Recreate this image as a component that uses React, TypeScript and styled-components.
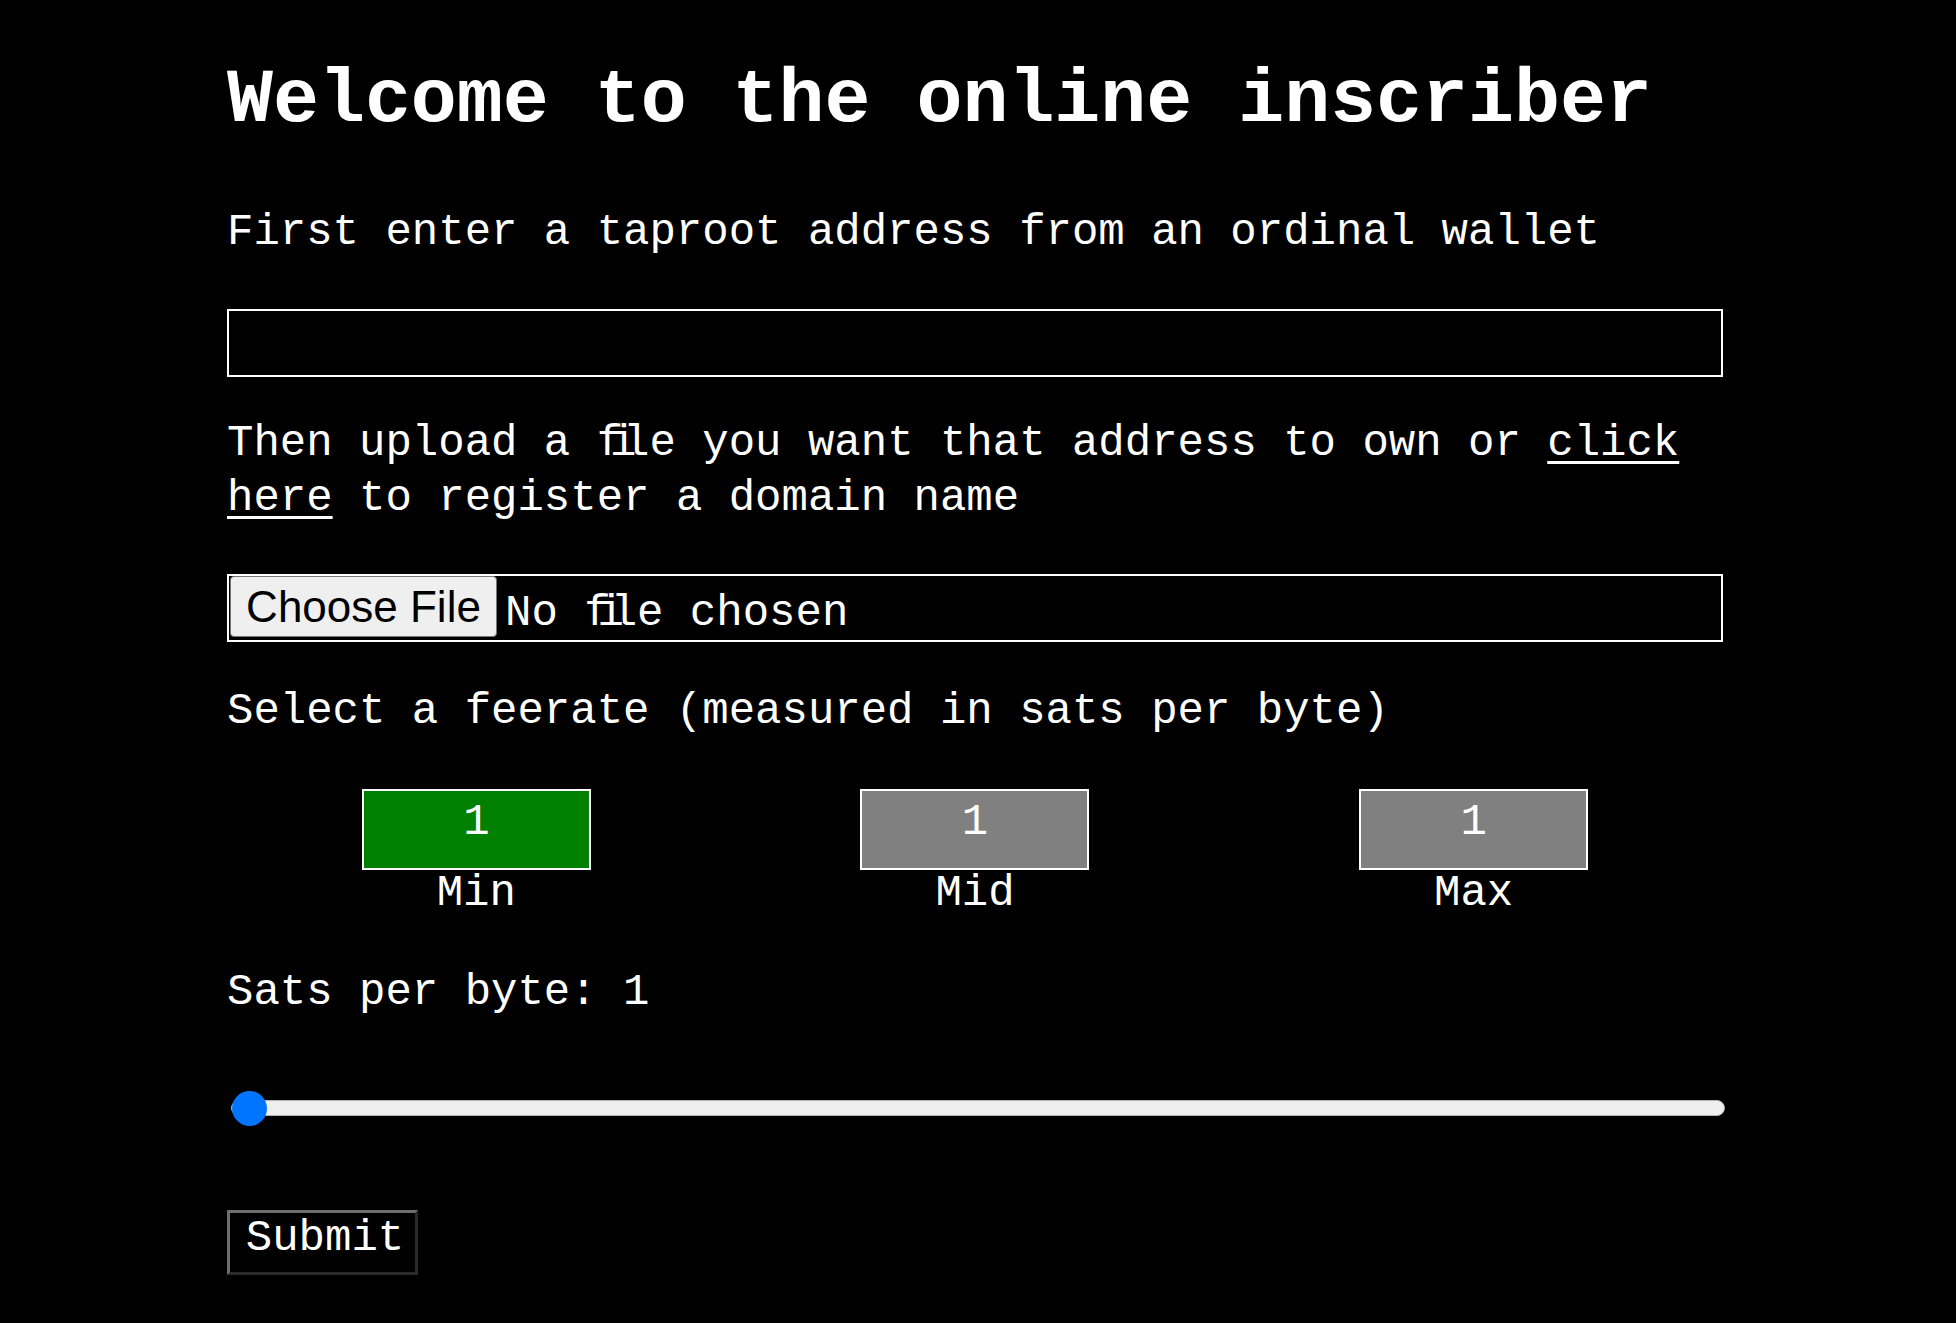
import React, { useState } from "react";
import styled, { createGlobalStyle } from "styled-components";

const GlobalStyle = createGlobalStyle`
  html, body {
    margin: 0;
    padding: 0;
    background: #000000;
  }
  body {
    color: #ffffff;
    font-family: "Liberation Mono", "Courier New", monospace;
  }
`;

const Page = styled.main`
  width: 1496px;
  margin-left: 227px;
  padding-top: 57px;
  padding-bottom: 46px;
  display: flex;
  flex-direction: column;
`;

const Title = styled.h1`
  margin: 0;
  font-family: "Liberation Mono", "Courier New", monospace;
  font-weight: 700;
  font-size: 76.6px;
  line-height: 87px;
  color: #ffffff;
`;

const Text = styled.p<{ $top: number }>`
  margin: ${(p) => p.$top}px 0 0 0;
  font-size: 44px;
  line-height: 55px;
  color: #ffffff;
`;

const Lig = styled.span`
  letter-spacing: -0.3em;
`;

const Link = styled.a`
  color: #ffffff;
  text-decoration: underline;
  text-decoration-thickness: 3px;
  text-underline-offset: 6px;
`;

const AddressInput = styled.input`
  box-sizing: border-box;
  margin: 49.5px 0 0 0;
  width: 100%;
  height: 68px;
  flex-shrink: 0;
  background: #000000;
  border: 2px solid #ffffff;
  color: #ffffff;
  font-family: "Liberation Mono", "Courier New", monospace;
  font-size: 44px;
  padding: 0 8px;
  outline: none;
`;

const FileBox = styled.label`
  box-sizing: border-box;
  margin-top: 48.5px;
  width: 100%;
  height: 68px;
  flex-shrink: 0;
  border: 2px solid #ffffff;
  display: flex;
  align-items: center;
  padding-left: 1px;
  gap: 8px;
  cursor: pointer;
`;

const HiddenFile = styled.input`
  display: none;
`;

const ChooseButton = styled.span`
  box-sizing: border-box;
  height: 61px;
  width: 267px;
  margin-top: -3px;
  display: flex;
  align-items: center;
  justify-content: center;
  background: #efefef;
  border: 1px solid #767676;
  border-radius: 4px;
  color: #000000;
  font-family: "Liberation Sans", Arial, sans-serif;
  font-size: 44px;
`;

const FileName = styled.span`
  margin-top: 10px;
  font-size: 44px;
  line-height: 55px;
  color: #ffffff;
`;

const FeeRow = styled.div`
  margin-top: 50.5px;
  display: grid;
  grid-template-columns: repeat(3, 1fr);
`;

const FeeOption = styled.div`
  display: flex;
  flex-direction: column;
  align-items: center;
`;

const FeeBox = styled.button<{ $active: boolean }>`
  box-sizing: border-box;
  width: 229px;
  height: 81px;
  flex-shrink: 0;
  padding: 0 0 15px 0;
  margin: 0;
  border: 2px solid #ffffff;
  background: ${(p) => (p.$active ? "#008000" : "#808080")};
  color: #ffffff;
  font-family: "Liberation Mono", "Courier New", monospace;
  font-size: 44px;
  line-height: 55px;
  text-align: center;
  cursor: pointer;
`;

const FeeLabel = styled.span`
  margin-top: 2px;
  font-size: 44px;
  line-height: 42px;
`;

const Range = styled.input`
  -webkit-appearance: none;
  appearance: none;
  margin: 70.8px 0 0 4px;
  width: 1494px;
  height: 35px;
  flex-shrink: 0;
  background: transparent;
  padding: 0;

  &::-webkit-slider-runnable-track {
    box-sizing: border-box;
    height: 16px;
    background: #efefef;
    border: 1px solid #b2b2b2;
    border-radius: 8px;
  }

  &::-webkit-slider-thumb {
    -webkit-appearance: none;
    appearance: none;
    width: 35px;
    height: 35px;
    border-radius: 50%;
    background: #0075ff;
    border: none;
    margin-top: -9.5px;
  }

  &:focus {
    outline: none;
  }
`;

const SubmitButton = styled.button`
  align-self: flex-start;
  box-sizing: border-box;
  margin-top: 85px;
  width: 191px;
  height: 65px;
  flex-shrink: 0;
  padding: 0 0 10px 5px;
  background: #000000;
  color: #ffffff;
  font-family: "Liberation Mono", "Courier New", monospace;
  font-size: 44px;
  line-height: 44px;
  border-style: solid;
  border-width: 3px;
  border-color: #6e6e6e #2b2b2b #2b2b2b #6e6e6e;
  cursor: pointer;
`;

const fees = [
  { label: "Min", value: 1 },
  { label: "Mid", value: 1 },
  { label: "Max", value: 1 },
];

export default function App() {
  const [selected, setSelected] = useState(0);
  const [rate, setRate] = useState(1);

  return (
    <>
      <GlobalStyle />
      <Page>
        <Title>Welcome to the online inscriber</Title>
        <Text $top={60.5}>First enter a taproot address from an ordinal wallet</Text>
        <AddressInput type="text" />
        <Text $top={38.5}>
          Then upload a <Lig>fi</Lig>le you want that address to own or{" "}
          <Link href="#">
            {"click"}
            {" "}
            {"here"}
          </Link>{" "}
          to register a domain name
        </Text>
        <FileBox>
          <HiddenFile type="file" />
          <ChooseButton>Choose File</ChooseButton>
          <FileName>
            No <Lig>fi</Lig>le chosen
          </FileName>
        </FileBox>
        <Text $top={41.7}>Select a feerate (measured in sats per byte)</Text>
        <FeeRow>
          {fees.map((f, i) => (
            <FeeOption key={f.label}>
              <FeeBox
                type="button"
                $active={selected === i}
                onClick={() => {
                  setSelected(i);
                  setRate(f.value);
                }}
              >
                {f.value}
              </FeeBox>
              <FeeLabel>{f.label}</FeeLabel>
            </FeeOption>
          ))}
        </FeeRow>
        <Text $top={50.5}>Sats per byte: {rate}</Text>
        <Range
          type="range"
          min={1}
          max={100}
          value={rate}
          onChange={(e) => setRate(Number(e.target.value))}
        />
        <SubmitButton type="button">Submit</SubmitButton>
      </Page>
    </>
  );
}
